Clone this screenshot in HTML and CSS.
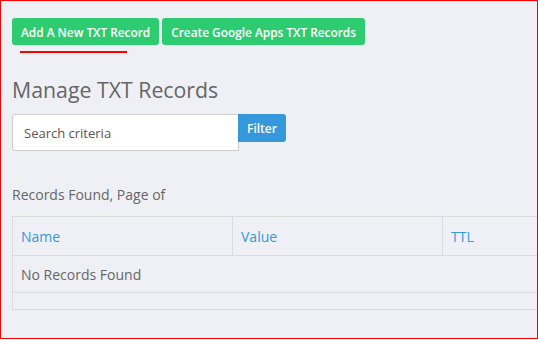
FILE: index.html
```html
<!DOCTYPE html>
<html lang="en">
<head>
  <meta charset="UTF-8">
  <title>Manage TXT Records</title>
  <link rel="stylesheet" href="styles.css">
</head>
<body>
  <div class="frame">
    <div class="actions">
      <button class="btn btn-green btn-first">Add A New TXT Record</button>
      <button class="btn btn-green">Create Google Apps TXT Records</button>
    </div>

    <h2>Manage TXT Records</h2>

    <div class="search">
      <input type="text" placeholder="Search criteria">
      <button class="btn btn-blue">Filter</button>
    </div>

    <p class="summary">Records Found, Page of</p>

    <table class="records">
      <thead>
        <tr>
          <th class="col-name">Name</th>
          <th class="col-value">Value</th>
          <th class="col-ttl">TTL</th>
        </tr>
      </thead>
      <tbody>
        <tr>
          <td colspan="3">No Records Found</td>
        </tr>
      </tbody>
      <tfoot>
        <tr>
          <td colspan="3"></td>
        </tr>
      </tfoot>
    </table>
  </div>
</body>
</html>
```

FILE: styles.css
```css
body {
  margin: 0;
  font-family: "Open Sans", Arial, sans-serif;
  background-color: #fff;
}

.frame {
  box-sizing: border-box;
  width: 538px;
  height: 339px;
  border: 1px solid #f00;
  background-color: #eff0f5;
  padding: 17px 0 0 11px;
  overflow: hidden;
}

.actions {
  display: flex;
  gap: 3px;
}

.btn {
  font-family: inherit;
  font-size: 11.85px;
  font-weight: 600;
  color: #fff;
  border: none;
  border-radius: 3px;
  cursor: pointer;
}

.btn-green {
  background-color: #2ecc71;
  height: 27px;
  padding: 0 9px;
}

.btn-first {
  position: relative;
}

/* red marker under the first button */
.btn-first::after {
  content: "";
  position: absolute;
  left: 8px;
  top: 33px;
  width: 107px;
  height: 2px;
  background-color: #f00;
}

h2 {
  margin: 30px 0 0;
  font-size: 21.3px;
  font-weight: 400;
  color: #666;
  line-height: 30px;
}

.search {
  display: flex;
  align-items: flex-start;
  margin-top: 9px;
}

.search input {
  box-sizing: border-box;
  width: 227px;
  height: 37px;
  padding: 0 11px;
  font-family: inherit;
  font-size: 13px;
  color: #555;
  background-color: #fff;
  border: 1px solid #ccc;
  border-radius: 3px 0 0 3px;
  outline: none;
}

.search input::placeholder {
  color: #555;
}

.btn-blue {
  margin-left: -1px;
  height: 28px;
  padding: 0 9px;
  font-size: 12px;
  background-color: #3498db;
  border-radius: 0 3px 3px 0;
}

.summary {
  margin: 34px 0 0;
  font-size: 14px;
  line-height: 20px;
  color: #666;
}

.records {
  margin-top: 11px;
  width: 640px;
  border-collapse: collapse;
  font-size: 14px;
}

.records th,
.records td {
  border: 1px solid #dcdcdc;
  text-align: left;
  padding: 0 8px;
}

.records th {
  height: 38px;
  font-weight: 400;
  color: #3498db;
}

.col-name {
  width: 203px;
}

.col-value {
  width: 193px;
}

.records tbody td {
  height: 36px;
  color: #666;
}

.records tfoot td {
  height: 16px;
}
```
